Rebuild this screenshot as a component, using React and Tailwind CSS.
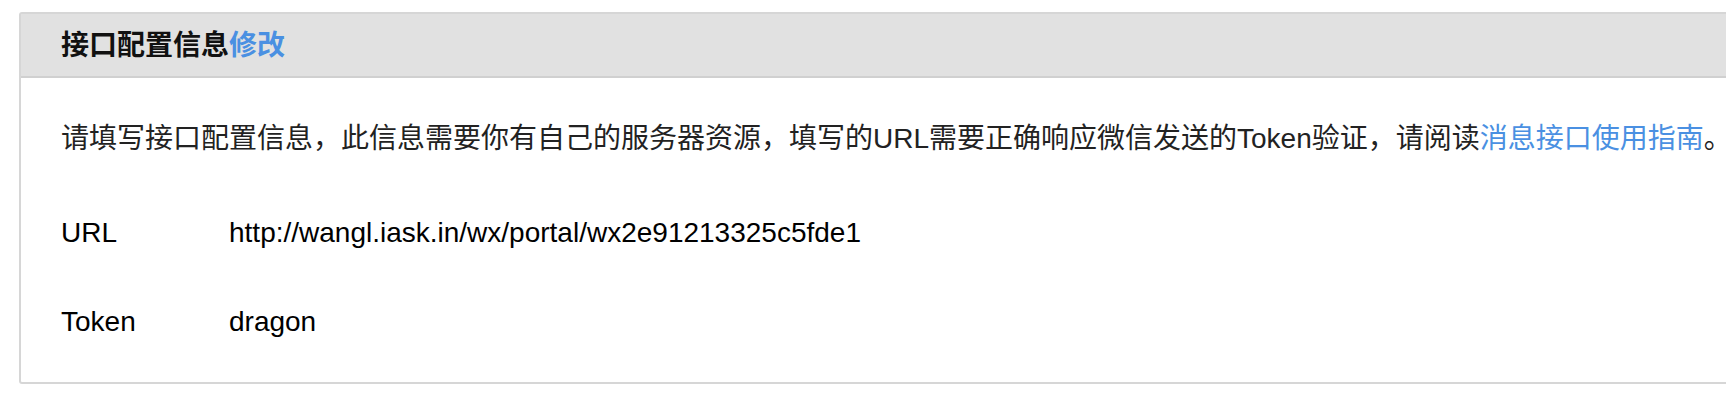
export default function App() {
  const font = { fontFamily: '"Liberation Sans", "Noto Sans CJK SC", sans-serif' };
  return (
    <div className="w-full overflow-hidden bg-white pt-3 pb-[19px] pl-[19px]" style={font}>
      <div className="w-[1740px] rounded-[3px] border-2 border-[#d6d6d6] bg-white">
        <div className="h-[64px] border-b-2 border-[#d0d0d0] bg-[#e1e1e1] pl-[40px] text-[28px] leading-[64px] font-bold text-[#111]">
          接口配置信息<a className="text-[#4a90e2]">修改</a>
        </div>
        <div className="pl-[40px] pt-[41px] pb-[40px] text-[28px] leading-[40px] text-[#222]">
          <p className="w-fit whitespace-nowrap">
            请填写接口配置信息，此信息需要你有自己的服务器资源，填写的URL需要正确响应微信发送的Token验证，请阅读
            <a className="text-[#4a90e2]">消息接口使用指南</a>。
          </p>
          <div className="mt-[54px] flex">
            <span className="w-[168px] text-black">URL</span>
            <span className="text-black">http://wangl.iask.in/wx/portal/wx2e91213325c5fde1</span>
          </div>
          <div className="mt-[49px] flex">
            <span className="w-[168px] text-black">Token</span>
            <span className="text-black">dragon</span>
          </div>
        </div>
      </div>
    </div>
  );
}
